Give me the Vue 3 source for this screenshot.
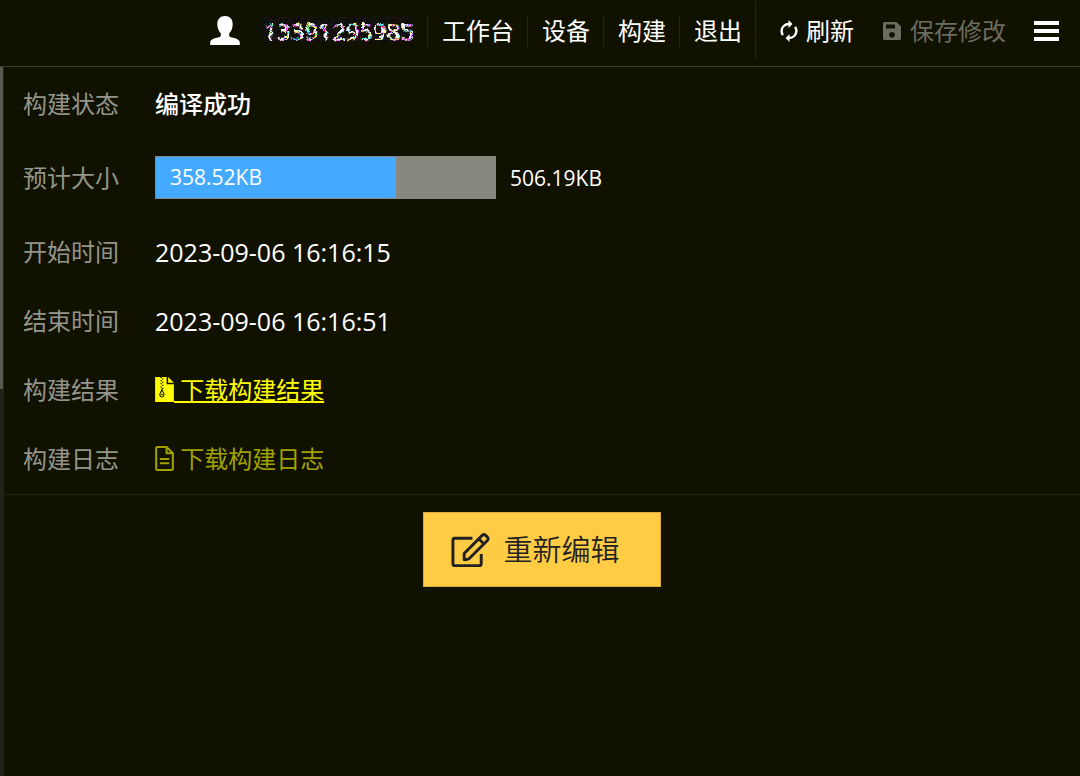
<template>
  <div class="build-page">
    <header class="top-bar">
      <a class="user" href="#">
        <svg class="user-icon" viewBox="0 0 30 30" aria-hidden="true">
          <path d="M15 1c4.700 0 7.700 3 7.700 8.200 0 3.900-1.500 7.300-3.500 9v2.300c0 1.300 1.200 1.700 3 2.100 4.600 1 7.600 2.300 7.600 5.200V30H.2v-2.200c0-2.900 3-4.200 7.600-5.200 1.800-.4 3-.8 3-2.100v-2.300c-2-1.700-3.500-5.100-3.500-9C7.300 4 10.300 1 15 1z" />
        </svg>
        <span class="phone">{{ user }}</span>
      </a>
      <nav class="nav">
        <a v-for="item in navItems" :key="item" class="nav-item" href="#">{{ item }}</a>
      </nav>
      <div class="tools">
        <button class="tool" type="button">
          <svg class="refresh-icon" viewBox="0 0 18 22" aria-hidden="true">
            <path d="M9 4C4.800 4 1.600 7 1.600 11c0 1.600.5 3 1.300 4.200M9 18c4.200 0 7.400-3 7.400-7 0-1.600-.5-3-1.300-4.200" />
            <path class="arrow" d="M8.500 0v8l4-4zM9.500 14v8l-4-4z" />
          </svg>
          刷新
        </button>
        <button class="tool" type="button" disabled>
          <svg class="save-icon" viewBox="0 0 20 20" aria-hidden="true">
            <path fill-rule="evenodd" d="M2.500 1h12L19 5.500v12a1.500 1.500 0 0 1-1.500 1.500h-15A1.500 1.500 0 0 1 1 17.500v-15A1.500 1.500 0 0 1 2.500 1zM4 3.500v4h9v-4zM10 11a2.800 2.800 0 1 0 0 5.600 2.800 2.800 0 0 0 0-5.600z" />
          </svg>
          保存修改
        </button>
        <button class="menu" type="button" aria-label="菜单">
          <span></span>
          <span></span>
          <span></span>
        </button>
      </div>
    </header>

    <div class="body">
      <div class="scroll-track">
        <div class="scroll-thumb"></div>
      </div>
      <main class="content">
        <dl class="info">
          <div class="row">
            <dt>构建状态</dt>
            <dd class="status">编译成功</dd>
          </div>
          <div class="row row-size">
            <dt>预计大小</dt>
            <dd class="size">
              <div class="bar">
                <div class="bar-used" :style="{ width: usedPercent }">{{ usedSize }}KB</div>
              </div>
              <span>{{ totalSize }}KB</span>
            </dd>
          </div>
          <div class="row">
            <dt>开始时间</dt>
            <dd class="time">2023-09-06 16:16:15</dd>
          </div>
          <div class="row">
            <dt>结束时间</dt>
            <dd class="time">2023-09-06 16:16:51</dd>
          </div>
          <div class="row">
            <dt>构建结果</dt>
            <dd>
              <a class="download result" href="#">
                <svg class="file-icon" viewBox="0 0 18 24" aria-hidden="true">
                  <path fill="currentColor" d="M0 0h11v7h7v17H0zM12.500 0L18 5.500h-5.500z" />
                  <path class="zip" d="M5 .5h1.500M6.500 2H8M5 3.500h1.500M6.500 5H8M5 6.500h1.500M6.500 8H8M5 9.500h1.500M6.500 11H8" />
                  <path class="zip" d="M6.500 12l-2 4.500c-.5 3.500 4.500 3.500 4 0zM5.500 17h2" />
                </svg><span class="download-text">&nbsp;下载构建结果</span>
              </a>
            </dd>
          </div>
          <div class="row">
            <dt>构建日志</dt>
            <dd>
              <a class="download log" href="#">
                <svg class="file-icon" viewBox="0 0 18 24" aria-hidden="true">
                  <path class="line" d="M2 1h9l6 6v15a1 1 0 0 1-1 1H2a1 1 0 0 1-1-1V2a1 1 0 0 1 1-1zM11 1v6h6M4.500 12.500h9M4.500 16.500h9" />
                </svg><span class="download-text">&nbsp;下载构建日志</span>
              </a>
            </dd>
          </div>
        </dl>
        <div class="actions">
          <button class="edit" type="button">
            <svg class="edit-icon" viewBox="0 0 40 36" aria-hidden="true">
              <path d="M22 6H4a2 2 0 0 0-2 2v24a2 2 0 0 0 2 2h25a2 2 0 0 0 2-2V22" />
              <path d="M13.500 28v-6.500L32 3c1-1 2.500-1 3.500 0l1.800 1.800c1 1 1 2.500 0 3.500L19 26.500c-1.500 1.200-3.500 1.500-5.500 1.500zM28.500 6.500l5 5" />
            </svg>
            重新编辑
          </button>
        </div>
      </main>
    </div>

    <!-- 手机号打码 -->
    <svg class="defs" width="0" height="0" aria-hidden="true">
      <filter id="mosaic" x="0" y="0.15" width="1" height="0.7" color-interpolation-filters="sRGB">
        <feTurbulence type="turbulence" baseFrequency="0.16" numOctaves="2" seed="8" result="noise" />
        <feDisplacementMap in="SourceGraphic" in2="noise" scale="5" xChannelSelector="R" yChannelSelector="G" result="moved" />
        <feFlood flood-color="#080402" result="back" />
        <feMerge result="text">
          <feMergeNode in="back" />
          <feMergeNode in="moved" />
        </feMerge>
        <feColorMatrix in="noise" type="matrix" values="6 0 0 0 -0.1  0 6 0 0 -0.1  0 0 6 0 -0.1  0 0 0 0 1" result="color" />
        <feComposite in="text" in2="color" operator="arithmetic" k1="0.94" k2="0" k3="0.06" k4="0" />
      </filter>
    </svg>
  </div>
</template>

<script setup>
import { computed, ref } from "vue";

const user = ref("13391295985");
const navItems = ["工作台", "设备", "构建", "退出"];

// 占用大小，单位KB
const usedSize = ref(358.52);
const totalSize = ref(506.19);
const usedPercent = computed(() => `${(usedSize.value / totalSize.value) * 100}%`);
</script>

<style>
body {
  background: #111100;
}
</style>

<style scoped>
.build-page {
  min-height: 100vh;
  display: flex;
  flex-direction: column;
  background: #111100;
  color: #fff;
  font-family: "Open Sans", "Noto Sans CJK SC", sans-serif;
  font-size: 24px;
  line-height: 32px;
}

a {
  color: inherit;
  text-decoration: none;
}

button {
  border: 0;
  padding: 0;
  background: none;
  color: inherit;
  font: inherit;
  cursor: pointer;
}

svg {
  flex-shrink: 0;
}

/* 顶部栏 */
.top-bar {
  display: flex;
  justify-content: flex-end;
  height: 66px;
  padding-right: 21px;
  border-bottom: 1px solid #3c3c31;
}

.user {
  display: flex;
  align-items: center;
  gap: 22px;
  height: 60px;
  padding-right: 14px;
}

.user-icon {
  width: 30px;
  height: 30px;
  fill: #fff;
}

.phone {
  font-weight: 600;
  filter: url(#mosaic);
}

.nav {
  display: flex;
  align-items: center;
  height: 62px;
}

.nav-item {
  padding: 0 13px 0 14px;
  border-left: 1px solid #24241a;
}

.tools {
  display: flex;
  align-items: center;
  gap: 28px;
  height: 58px;
  margin-top: 2px;
  padding-left: 24px;
  border-left: 1px solid #24241a;
}

.tool {
  display: flex;
  align-items: center;
  gap: 8px;
}

.tool:disabled {
  color: #6b6b60;
}

.refresh-icon {
  width: 18px;
  height: 22px;
  fill: none;
  stroke: currentColor;
  stroke-width: 2.4;
}

.refresh-icon .arrow {
  fill: currentColor;
  stroke: none;
}

.save-icon {
  width: 20px;
  height: 20px;
  fill: currentColor;
}

.menu {
  display: flex;
  flex-direction: column;
  gap: 4px;
  width: 25px;
}

.menu span {
  height: 4px;
  background: #fff;
}

/* 内容区 */
.body {
  flex: 1;
  display: flex;
}

.scroll-track {
  width: 4px;
  background: #222217;
}

.scroll-thumb {
  width: 3px;
  height: 322px;
  background: #58584d;
}

.content {
  flex: 1;
}

.info {
  margin: 0;
  padding: 2px 0 1px;
  border-bottom: 1px solid #24241a;
}

.row {
  display: flex;
  align-items: center;
  height: 69px;
  padding-left: 19px;
}

.row-size {
  height: 79px;
}

dt {
  width: 132px;
  color: #94948b;
}

dd {
  margin: 0;
}

.status {
  font-weight: 500;
}

.time {
  font-size: 25px;
}

.size {
  display: flex;
  align-items: center;
  gap: 14px;
  font-size: 21px;
  font-weight: 500;
}

.bar {
  width: 341px;
  height: 43px;
  box-sizing: border-box;
  border: 1px solid #88887f;
  background: #88887f;
}

.bar-used {
  height: 41px;
  box-sizing: border-box;
  padding-left: 14px;
  background: #44aaff;
  line-height: 41px;
}

.download {
  display: flex;
  align-items: center;
}

.file-icon {
  width: 19px;
  height: 25px;
}

.result {
  color: #ffff00;
}

.result .download-text {
  text-decoration: underline;
}

.log {
  color: #a0a000;
}

.zip {
  fill: none;
  stroke: #111100;
  stroke-width: 1;
}

.line {
  fill: none;
  stroke: currentColor;
  stroke-width: 2;
}

.actions {
  display: flex;
  justify-content: center;
  padding-top: 17px;
}

.edit {
  display: flex;
  align-items: center;
  gap: 13px;
  height: 75px;
  padding: 0 40px 0 27px;
  border: 1px solid #d9ad3b;
  background: #ffcc44;
  color: #222;
  font-size: 29px;
  font-weight: 350;
}

.edit-icon {
  width: 39px;
  height: 36px;
  fill: none;
  stroke: currentColor;
  stroke-width: 3;
  stroke-linejoin: round;
}

.defs {
  position: absolute;
}
</style>
